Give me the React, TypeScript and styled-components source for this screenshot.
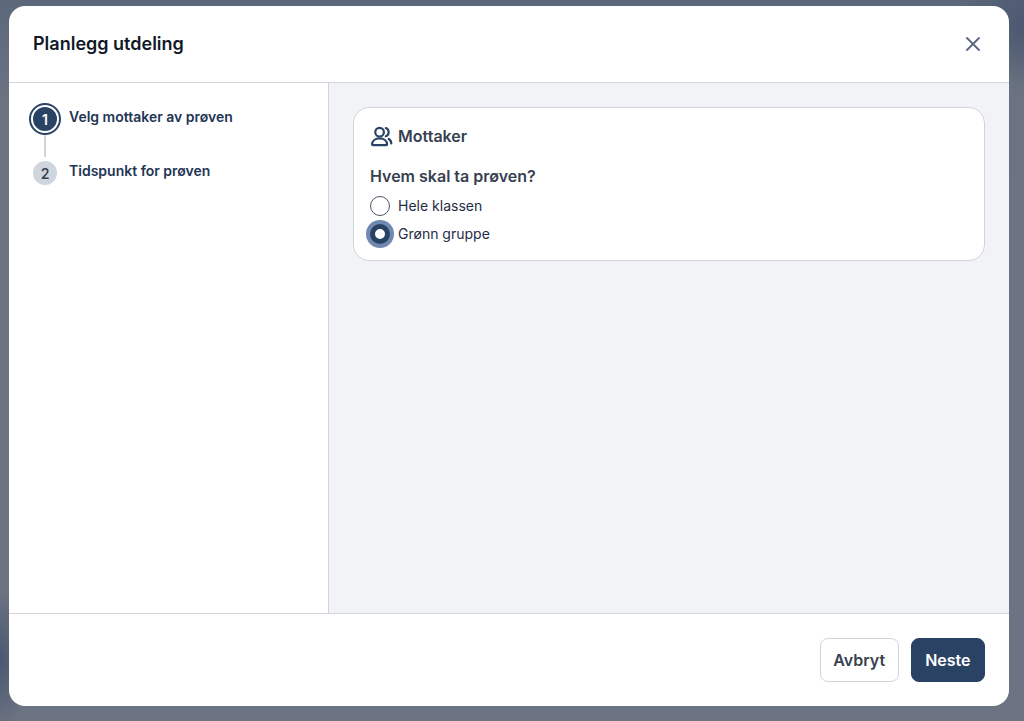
import React from 'react';
import styled, { createGlobalStyle } from 'styled-components';
import { X } from 'lucide-react';

const GlobalStyle = createGlobalStyle`
  html, body {
    margin: 0;
    padding: 0;
    height: 100%;
  }
  body {
    font-family: Inter, "Liberation Sans", sans-serif;
    color: #1f2937;
  }
`;

const Backdrop = styled.div`
  height: 721px;
  overflow: hidden;
  padding: 6px 15px 15px 9px;
  box-sizing: border-box;
  background:
    radial-gradient(ellipse 30px 70px at 0 660px, #4b5870 0%, rgba(75, 88, 112, 0) 100%),
    radial-gradient(ellipse 70px 60px at 1024px 25px, #4b5870 0%, rgba(75, 88, 112, 0) 100%),
    linear-gradient(180deg, #5c6779 0%, #5e697b 2%, #6b7382 14%, #6c7382 100%);
`;

const Modal = styled.div`
  display: flex;
  flex-direction: column;
  height: 700px;
  background: #fff;
  border-radius: 16px;
  overflow: hidden;
`;

const Header = styled.header`
  flex: none;
  height: 77px;
  box-sizing: border-box;
  display: flex;
  align-items: center;
  justify-content: space-between;
  padding: 0 24px;
  border-bottom: 1px solid #d1d5db;
`;

const Title = styled.h1`
  margin: 0;
  font-size: 18px;
  line-height: 28px;
  font-weight: 600;
  color: #111827;
`;

const CloseButton = styled.button`
  display: flex;
  padding: 0;
  border: 0;
  background: none;
  color: #5d6b82;
`;

const Body = styled.div`
  flex: 1;
  display: flex;
  min-height: 0;
`;

const Sidebar = styled.aside`
  flex: none;
  width: 320px;
  box-sizing: border-box;
  padding: 21px 21px 0 21px;
  border-right: 1px solid #d1d5db;
`;

const Step = styled.div<{ $tall?: boolean }>`
  display: flex;
  gap: 9px;
  height: ${(p) => (p.$tall ? '54px' : '32px')};
`;

const Marker = styled.div`
  flex: none;
  width: 30px;
  display: flex;
  flex-direction: column;
  align-items: center;
`;

const ActiveDot = styled.div`
  flex: none;
  box-sizing: content-box;
  width: 24px;
  height: 24px;
  margin-top: 1px;
  border-radius: 50%;
  display: flex;
  align-items: center;
  justify-content: center;
  background: #2a4365;
  border: 2px solid #fff;
  outline: 2px solid #2a4365;
  color: #fff;
  font-size: 14px;
  font-weight: 600;
`;

const Connector = styled.div`
  width: 2px;
  height: 22px;
  margin-top: 2px;
  background: #d1d5db;
`;

const IdleDot = styled.div`
  width: 24px;
  height: 24px;
  margin-top: 3px;
  border-radius: 50%;
  display: flex;
  align-items: center;
  justify-content: center;
  background: #d0d5dd;
  color: #374151;
  font-size: 14px;
  font-weight: 600;
`;

const StepLabel = styled.span`
  font-size: 14px;
  line-height: 20px;
  font-weight: 600;
  color: #233554;
  margin-top: 3px;
`;

const Content = styled.main`
  flex: 1;
  background: #f1f3f7;
  padding: 24px;
`;

const Card = styled.section`
  background: #fff;
  border: 1px solid #d1d5db;
  border-radius: 16px;
  padding: 16px;
  height: 154px;
  box-sizing: border-box;
`;

const CardTitle = styled.div`
  display: flex;
  align-items: center;
  gap: 5px;
  font-size: 16px;
  line-height: 24px;
  font-weight: 600;
  color: #374151;
`;

const Question = styled.div`
  margin-top: 16px;
  margin-bottom: 4px;
  font-size: 16px;
  line-height: 24px;
  font-weight: 600;
  color: #374151;
`;

const RadioRow = styled.label`
  display: flex;
  align-items: center;
  gap: 8px;
  height: 28px;
  font-size: 14px;
  color: #1f2d45;
`;

const RadioText = styled.span`
  margin-bottom: 2px;
`;

const Radio = styled.span<{ $checked?: boolean }>`
  width: 20px;
  height: 20px;
  box-sizing: border-box;
  border-radius: 50%;
  background: #fff;
  border: ${(p) => (p.$checked ? '5px solid #2a4365' : '1px solid #4b5563')};
  box-shadow: ${(p) => (p.$checked ? '0 0 0 4px #7089b0' : 'none')};
`;

const Footer = styled.footer`
  flex: none;
  height: 93px;
  box-sizing: border-box;
  display: flex;
  align-items: center;
  justify-content: flex-end;
  gap: 12px;
  padding: 0 24px;
  border-top: 1px solid #d1d5db;
`;

const Button = styled.button<{ $primary?: boolean }>`
  height: 44px;
  box-sizing: border-box;
  padding: 0 ${(p) => (p.$primary ? '13.5px' : '12.5px')};
  border-radius: 8px;
  font-family: inherit;
  font-size: 16px;
  font-weight: 600;
  border: 1px solid ${(p) => (p.$primary ? '#2a4365' : '#d1d5db')};
  background: ${(p) => (p.$primary ? '#2a4365' : '#fff')};
  color: ${(p) => (p.$primary ? '#fff' : '#374151')};
`;

const PeopleIcon = () => (
  <svg width="23" height="23" viewBox="0 0 24 24" fill="none" stroke="#2a4365" strokeWidth="2.3" strokeLinecap="round" strokeLinejoin="round">
    <circle cx="10" cy="7.5" r="4.5" />
    <path d="M16.5 3.2a4.6 4.6 0 0 1 0 8.6" />
    <path d="M2.2 20.4c0-3.9 3.4-6.4 7.8-6.4s7.8 2.5 7.8 6.4c0 .4-.3.6-.7.6H2.9c-.4 0-.7-.2-.7-.6z" />
    <path d="M19.5 14.6c1.6.9 2.7 2.6 2.7 4.6" />
  </svg>
);

export default function App() {
  return (
    <>
      <GlobalStyle />
      <Backdrop>
        <Modal>
          <Header>
            <Title>Planlegg utdeling</Title>
            <CloseButton aria-label="Lukk">
              <X size={24} strokeWidth={2} />
            </CloseButton>
          </Header>
          <Body>
            <Sidebar>
              <Step $tall>
                <Marker>
                  <ActiveDot>1</ActiveDot>
                  <Connector />
                </Marker>
                <StepLabel>Velg mottaker av prøven</StepLabel>
              </Step>
              <Step>
                <Marker>
                  <IdleDot>2</IdleDot>
                </Marker>
                <StepLabel>Tidspunkt for prøven</StepLabel>
              </Step>
            </Sidebar>
            <Content>
              <Card>
                <CardTitle>
                  <PeopleIcon />
                  Mottaker
                </CardTitle>
                <Question>Hvem skal ta prøven?</Question>
                <RadioRow>
                  <Radio />
                  <RadioText>Hele klassen</RadioText>
                </RadioRow>
                <RadioRow>
                  <Radio $checked />
                  <RadioText>Grønn gruppe</RadioText>
                </RadioRow>
              </Card>
            </Content>
          </Body>
          <Footer>
            <Button>Avbryt</Button>
            <Button $primary>Neste</Button>
          </Footer>
        </Modal>
      </Backdrop>
    </>
  );
}
